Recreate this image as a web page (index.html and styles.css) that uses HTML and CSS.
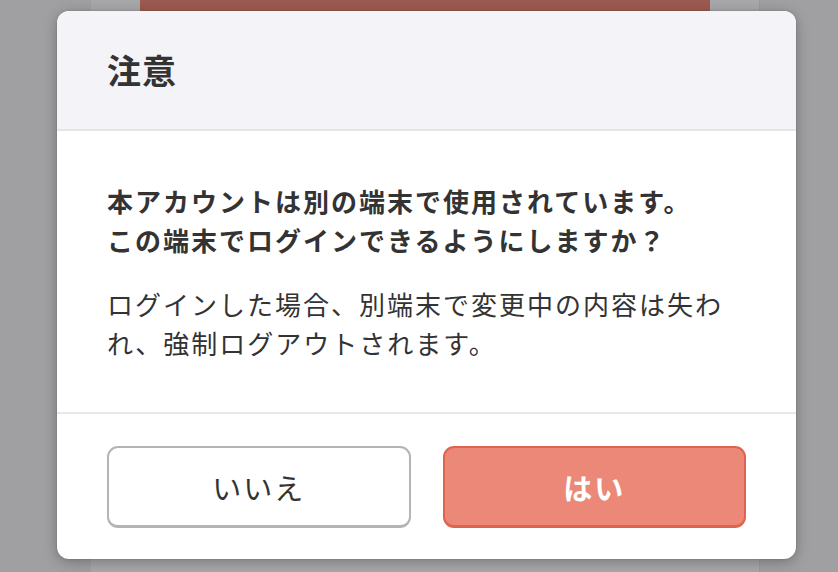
FILE: index.html
```html
<!DOCTYPE html>
<html lang="ja">
<head>
<meta charset="utf-8">
<title>注意</title>
<link rel="stylesheet" href="styles.css">
</head>
<body>
<div class="page">
  <div class="page-column">
    <div class="page-card"></div>
  </div>
</div>
<div class="overlay">
  <div class="dialog" role="dialog" aria-labelledby="dlg-title">
    <div class="dialog-header">
      <h1 id="dlg-title" class="dialog-title">注意</h1>
    </div>
    <div class="dialog-body">
      <p class="msg-strong">本アカウントは別の端末で使用されています。<br>この端末でログインできるようにしますか？</p>
      <p class="msg">ログインした場合、別端末で変更中の内容は失われ、強制ログアウトされます。</p>
    </div>
    <div class="dialog-footer">
      <button class="btn btn-secondary" type="button">いいえ</button>
      <button class="btn btn-primary" type="button">はい</button>
    </div>
  </div>
</div>
</body>
</html>
```

FILE: styles.css
```css
html, body {
  margin: 0;
  padding: 0;
  height: 100%;
}

body {
  background: #a0a0a2;
  font-family: "Noto Sans CJK JP", "Noto Sans", sans-serif;
  color: #333333;
  overflow: hidden;
}

.page {
  height: 100%;
  display: flex;
  justify-content: flex-start;
}

.page-column {
  margin-left: 91px;
  width: 669px;
  height: 100%;
  background: #a8a8aa;
  border-right: 1px solid #999a9c;
  box-sizing: border-box;
  padding: 0 49px;
}

.page-card {
  height: 15px;
  background: #9b5b50;
}

.overlay {
  position: absolute;
  top: 11px;
  left: 57px;
}

.dialog {
  width: 739px;
  background: #ffffff;
  border-radius: 12px;
  overflow: hidden;
  box-shadow: 0 3px 14px rgba(0, 0, 0, 0.28), 0 0 2px rgba(0, 0, 0, 0.2);
}

.dialog-header {
  height: 118px;
  background: #f4f4f8;
  border-bottom: 2px solid #e5e5e8;
  display: flex;
  align-items: center;
  padding: 0 50px;
}

.dialog-title {
  margin: 0;
  font-size: 34px;
  font-weight: 700;
  letter-spacing: 1px;
  line-height: 1;
  color: #333333;
}

.dialog-body {
  padding: 50px 50px 50px;
}

.msg-strong,
.msg {
  margin: 0;
  font-size: 26px;
  line-height: 39px;
  letter-spacing: 2px;
  color: #333333;
}

.msg-strong {
  font-weight: 700;
  margin-bottom: 25px;
}

.msg {
  font-weight: 400;
}

.dialog-footer {
  border-top: 2px solid #e8e8ea;
  padding: 32px 50px 31px;
  display: flex;
  gap: 32px;
}

.btn {
  flex: 1;
  height: 82px;
  border-radius: 11px;
  font-family: inherit;
  font-size: 29px;
  letter-spacing: 2px;
  cursor: pointer;
  box-sizing: border-box;
  padding: 0;
}

.btn-secondary {
  background: #ffffff;
  border: 2px solid #b4b4b6;
  border-bottom-width: 3px;
  color: #333333;
  font-weight: 400;
}

.btn-primary {
  background: #eb8877;
  border: 2px solid #df6450;
  border-bottom-width: 3px;
  color: #ffffff;
  font-weight: 700;
}
```
